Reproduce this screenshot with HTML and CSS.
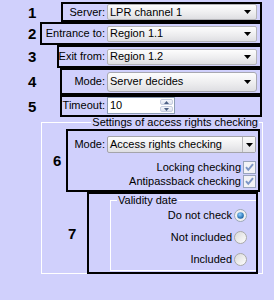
FILE: index.html
```html
<!DOCTYPE html>
<html>
<head>
<meta charset="utf-8">
<link rel="stylesheet" href="styles.css">
</head>
<body>
<div class="page">
  <div class="row">
    <span class="num">1</span>
    <div class="box b1">
      <span class="label">Server:</span>
      <div class="combo"><span class="val">LPR channel 1</span><svg class="arrow" width="7" height="4" viewBox="0 0 7 4"><path d="M0 0h7L3.5 4z"/></svg></div>
    </div>
  </div>
  <div class="row">
    <span class="num">2</span>
    <div class="box b2">
      <span class="label">Entrance to:</span>
      <div class="combo"><span class="val">Region 1.1</span><svg class="arrow" width="7" height="4" viewBox="0 0 7 4"><path d="M0 0h7L3.5 4z"/></svg></div>
    </div>
  </div>
  <div class="row">
    <span class="num">3</span>
    <div class="box b3">
      <span class="label">Exit from:</span>
      <div class="combo"><span class="val">Region 1.2</span><svg class="arrow" width="7" height="4" viewBox="0 0 7 4"><path d="M0 0h7L3.5 4z"/></svg></div>
    </div>
  </div>
  <div class="row">
    <span class="num">4</span>
    <div class="box b4">
      <span class="label">Mode:</span>
      <div class="combo tall"><span class="val">Server decides</span><svg class="arrow" width="7" height="4" viewBox="0 0 7 4"><path d="M0 0h7L3.5 4z"/></svg></div>
    </div>
  </div>
  <div class="row">
    <span class="num">5</span>
    <div class="box b5">
      <span class="label">Timeout:</span>
      <div class="spin">
        <span class="val">10</span>
        <div class="spin-btns">
          <span class="sb"><svg width="5" height="3" viewBox="0 0 5 3"><path d="M0 3h5L2.5 0z"/></svg></span>
          <span class="sb"><svg width="5" height="3" viewBox="0 0 5 3"><path d="M0 0h5L2.5 3z"/></svg></span>
        </div>
      </div>
    </div>
  </div>

  <fieldset class="group">
    <legend class="group-title">Settings of access rights checking</legend>
    <div class="row6">
      <span class="num n6">6</span>
      <div class="box6">
        <div class="mode-row">
          <span class="label">Mode:</span>
          <div class="combo classic"><span class="val">Access rights checking</span><span class="cbtn"><svg width="7" height="4" viewBox="0 0 7 4"><path d="M0 0h7L3.5 4z"/></svg></span></div>
        </div>
        <div class="check-row">
          <span>Locking checking</span>
          <svg class="chk" width="13" height="13" viewBox="0 0 13 13"><rect x="0.5" y="0.5" width="12" height="12" fill="#f3f3f6" stroke="#98a4bc"/><path d="M3 6.2l2.3 2.6 4.7-5.6" fill="none" stroke="#7d96c6" stroke-width="2"/></svg>
        </div>
        <div class="check-row">
          <span>Antipassback checking</span>
          <svg class="chk" width="13" height="13" viewBox="0 0 13 13"><rect x="0.5" y="0.5" width="12" height="12" fill="#f3f3f6" stroke="#98a4bc"/><path d="M3 6.2l2.3 2.6 4.7-5.6" fill="none" stroke="#7d96c6" stroke-width="2"/></svg>
        </div>
      </div>
    </div>
    <div class="row7">
      <span class="num n7">7</span>
      <div class="box7">
        <fieldset class="inner">
          <legend class="inner-title">Validity date</legend>
          <div class="radio-row">
            <span>Do not check</span>
            <svg class="rad" width="13" height="13" viewBox="0 0 13 13"><defs><radialGradient id="rg1" cx="0.4" cy="0.35" r="0.7"><stop offset="0" stop-color="#8fd0ff"/><stop offset="1" stop-color="#0d5aa0"/></radialGradient></defs><circle cx="6.5" cy="6.5" r="6" fill="#f0f0f0" stroke="#9aa6b6"/><circle cx="6.5" cy="6.5" r="3.3" fill="url(#rg1)"/></svg>
          </div>
          <div class="radio-row">
            <span>Not included</span>
            <svg class="rad" width="13" height="13" viewBox="0 0 13 13"><defs><linearGradient id="rg2" x1="0" y1="0" x2="1" y2="1"><stop offset="0" stop-color="#d8d8d8"/><stop offset="1" stop-color="#ffffff"/></linearGradient></defs><circle cx="6.5" cy="6.5" r="6" fill="url(#rg2)" stroke="#a8a8a8"/></svg>
          </div>
          <div class="radio-row">
            <span>Included</span>
            <svg class="rad" width="13" height="13" viewBox="0 0 13 13"><circle cx="6.5" cy="6.5" r="6" fill="url(#rg2)" stroke="#a8a8a8"/></svg>
          </div>
        </fieldset>
      </div>
    </div>
  </fieldset>
</div>
</body>
</html>
```

FILE: styles.css
```css
* { box-sizing: border-box; }
html, body { margin: 0; padding: 0; }
body {
  background: #d0d0fc;
  font-family: "Liberation Sans", Arial, sans-serif;
  font-size: 11px;
  color: #000;
  width: 274px;
  height: 300px;
  overflow: hidden;
}
.page { padding-top: 2px; }

.row {
  display: flex;
  align-items: center;
  margin-right: 12px;
}
.num {
  font-weight: bold;
  font-size: 15px;
  line-height: 15px;
}
.row .num { width: 40px; padding-left: 28px; }

.box {
  flex: 1;
  display: flex;
  align-items: center;
  border: 2px solid #000;
  padding-right: 3px;
}
.b1 { margin-left: 21px; height: 20px; }
.b2 { margin-left: 0; height: 23px; }
.b3 { margin-left: 20px; height: 23px; }
.b4 { margin-left: 20px; height: 27px; }
.b5 { margin-left: 20px; height: 22px; align-items: flex-start; }

.label {
  flex: 1;
  text-align: right;
  padding-right: 2px;
  white-space: nowrap;
  line-height: 13px;
}
.b5 .label { padding-top: 2px; }

.combo {
  width: 150px;
  height: 16px;
  display: flex;
  align-items: center;
  border: 1px solid #b4b4b8;
  border-radius: 2px;
  background: linear-gradient(#fdfdfd, #ececee 60%, #dedee2);
  padding-left: 2px;
}
.combo.tall { height: 20px; border-color: #a8a8b0; border-radius: 3px; }
.val { flex: 1; white-space: nowrap; line-height: 13px; }
.arrow { margin-right: 5px; fill: #000; }

.spin {
  width: 68px;
  height: 17px;
  display: flex;
  align-items: stretch;
  background: #fff;
  border: 1px solid #8c9cb4;
  margin-right: 82px;
}
.spin .val { padding-left: 2px; padding-top: 1px; }
.spin-btns {
  width: 15px;
  display: flex;
  flex-direction: column;
  gap: 1px;
  padding: 1px;
}
.sb {
  flex: 1;
  display: flex;
  align-items: center;
  justify-content: center;
  background: linear-gradient(#f4f6fc, #dde2ee);
  border: 1px solid #c6cde0;
  border-radius: 2px;
}
.sb svg { fill: #4d6185; }

.group {
  margin: -1px 0 0 41px;
  width: 222px;
  padding: 0;
  border: 1px solid #fff;
  min-width: 0;
}
.group-title {
  margin-left: auto;
  margin-right: 3px;
  padding: 0 1px;
  line-height: 13px;
  white-space: nowrap;
}

.row6 { display: flex; align-items: center; }
.n6 { width: 24px; padding-left: 11px; }
.box6 {
  flex: 1;
  margin-right: 2px;
  height: 63px;
  border: 2px solid #000;
  border-bottom-width: 2px;
  padding: 5px 2px 0 0;
  display: flex;
  flex-direction: column;
  align-items: stretch;
}
.mode-row { display: flex; align-items: center; }
.combo.classic {
  width: 149px;
  height: 17px;
  padding-right: 0;
  border-color: #a4a4aa;
}
.cbtn {
  width: 13px;
  height: 15px;
  display: flex;
  align-items: center;
  justify-content: center;
  background: linear-gradient(#fafafa, #e2e2e6);
  border-left: 1px solid #b8b8bc;
}
.cbtn svg { fill: #000; }

.check-row {
  display: flex;
  justify-content: flex-end;
  align-items: center;
  height: 13px;
  line-height: 13px;
  gap: 2px;
}
.check-row:nth-child(2) { margin-top: 8px; }
.check-row + .check-row { margin-top: 1px; }

.row7 { display: flex; align-items: center; margin-bottom: -1px; }
.n7 { width: 45px; padding-left: 26px; }
.box7 {
  flex: 1;
  margin-right: 4px;
  height: 82px;
  border: 2px solid #000;
  padding: 0 0 1px 21px;
  display: flex;
}
.inner {
  flex: 1;
  margin: 0;
  padding: 2px 9px 0 0;
  border: 1px solid #fff;
  border-right: 0;
  min-width: 0;
  display: flex;
  flex-direction: column;
  gap: 9px;
}
.inner-title {
  margin-left: 6px;
  padding: 0 1px;
  line-height: 13px;
  white-space: nowrap;
}
.radio-row {
  display: flex;
  justify-content: flex-end;
  align-items: center;
  gap: 2px;
  height: 13px;
  line-height: 13px;
}
.rad { display: block; }
.chk { display: block; }
```
